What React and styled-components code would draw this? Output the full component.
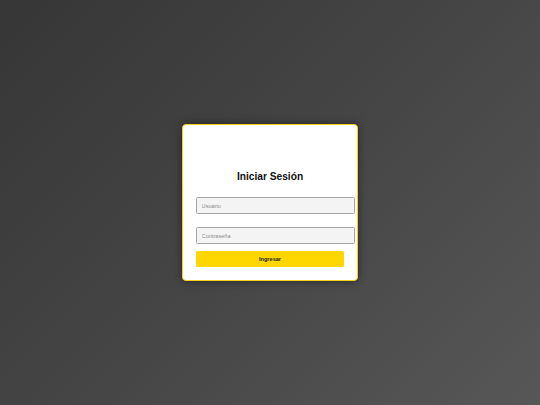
import React from "react";
import styled, { createGlobalStyle } from "styled-components";

const GlobalStyle = createGlobalStyle`
  html, body {
    margin: 0;
    padding: 0;
    height: 100%;
  }
  body {
    font-family: "Liberation Sans", Arial, sans-serif;
  }
  #root {
    height: 100%;
  }
`;

const Page = styled.div`
  min-height: 100vh;
  display: flex;
  align-items: center;
  justify-content: center;
  background: linear-gradient(135deg, #363636 0%, #454545 50%, #575757 100%);
`;

const Card = styled.form`
  width: 176px;
  box-sizing: border-box;
  padding: 13px;
  background: #ffffff;
  border: 1px solid #f2d21a;
  border-radius: 4px;
  box-shadow: 0 0 8px rgba(0, 0, 0, 0.45);
  display: flex;
  flex-direction: column;
  align-items: flex-start;
`;

const Title = styled.h2`
  align-self: stretch;
  margin: 32.5px 0 14.5px;
  font-size: 10.2px;
  line-height: 11.7px;
  font-weight: 700;
  color: #111;
  text-align: center;
`;

const Field = styled.input`
  width: 100%;
  height: 15.4px;
  box-sizing: content-box;
  padding: 0 4.6px;
  margin: 0 0 ${(p) => p.$gap}px;
  border: 1px solid #a6a6a6;
  border-radius: 1.5px;
  background: #f4f4f4;
  font-family: "Liberation Sans", Arial, sans-serif;
  font-size: 5.6px;
  color: #333;
  outline: none;

  &::placeholder {
    color: #8a8a8a;
  }
`;

const Submit = styled.button`
  width: 100%;
  height: 16.3px;
  padding: 0;
  border: none;
  border-radius: 1.5px;
  background: #ffd700;
  font-family: "Liberation Sans", Arial, sans-serif;
  font-size: 5.6px;
  font-weight: 700;
  color: #1a1a1a;
  cursor: pointer;
`;

export default function App() {
  return (
    <>
      <GlobalStyle />
      <Page>
        <Card onSubmit={(e) => e.preventDefault()}>
          <Title>Iniciar Sesión</Title>
          <Field type="text" placeholder="Usuario" $gap={12.6} />
          <Field type="password" placeholder="Contraseña" $gap={6.3} />
          <Submit type="submit">Ingresar</Submit>
        </Card>
      </Page>
    </>
  );
}
